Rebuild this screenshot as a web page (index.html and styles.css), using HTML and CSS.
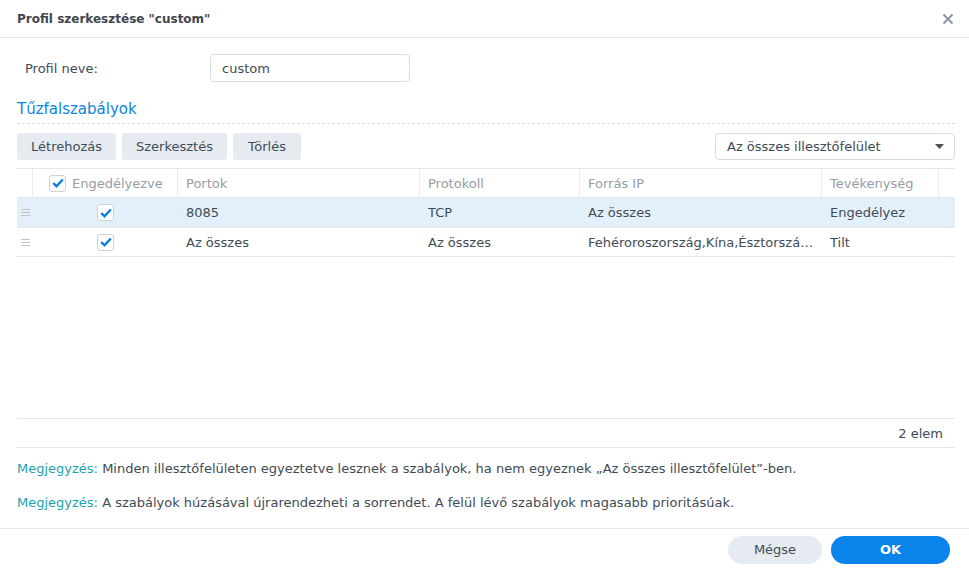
FILE: index.html
```html
<!DOCTYPE html>
<html lang="hu">
<head>
<meta charset="utf-8">
<title>Profil szerkesztése</title>
<link rel="stylesheet" href="styles.css">
</head>
<body>
<div class="dialog">
  <div class="titlebar">
    <span class="title">Profil szerkesztése "custom"</span>
    <svg class="close" width="12" height="12" viewBox="0 0 12 12"><path d="M1.5 1.5 L10.5 10.5 M10.5 1.5 L1.5 10.5" stroke="#9097a0" stroke-width="2" fill="none"/></svg>
  </div>
  <div class="content">
    <div class="field">
      <label class="field-label">Profil neve:</label>
      <div class="input">custom</div>
    </div>
    <div class="section-title">Tűzfalszabályok</div>
    <div class="toolbar">
      <div class="btns">
        <button class="btn">Létrehozás</button>
        <button class="btn">Szerkesztés</button>
        <button class="btn">Törlés</button>
      </div>
      <div class="select">
        <span>Az összes illesztőfelület</span>
        <svg width="9" height="5" viewBox="0 0 9 5"><path d="M0 0 H9 L4.5 5 Z" fill="#4a535c"/></svg>
      </div>
    </div>
    <div class="grid">
      <div class="row head">
        <div class="c c-h"></div>
        <div class="c c-en"><span class="cb"><svg width="12" height="10" viewBox="0 0 12 10"><path d="M1.2 5 L4.5 8.2 L10.8 1.5" stroke="#0a7fe3" stroke-width="2.4" fill="none"/></svg></span><span>Engedélyezve</span></div>
        <div class="c c-port">Portok</div>
        <div class="c c-proto">Protokoll</div>
        <div class="c c-ip">Forrás IP</div>
        <div class="c c-act">Tevékenység</div>
        <div class="c c-fill"></div>
      </div>
      <div class="row body sel">
        <div class="c c-h"><span class="handle"><i></i><i></i><i></i></span></div>
        <div class="c c-en center"><span class="cb"><svg width="12" height="10" viewBox="0 0 12 10"><path d="M1.2 5 L4.5 8.2 L10.8 1.5" stroke="#0a7fe3" stroke-width="2.4" fill="none"/></svg></span></div>
        <div class="c c-port">8085</div>
        <div class="c c-proto">TCP</div>
        <div class="c c-ip">Az összes</div>
        <div class="c c-act">Engedélyez</div>
        <div class="c c-fill"></div>
      </div>
      <div class="row body last">
        <div class="c c-h"><span class="handle"><i></i><i></i><i></i></span></div>
        <div class="c c-en center"><span class="cb"><svg width="12" height="10" viewBox="0 0 12 10"><path d="M1.2 5 L4.5 8.2 L10.8 1.5" stroke="#0a7fe3" stroke-width="2.4" fill="none"/></svg></span></div>
        <div class="c c-port">Az összes</div>
        <div class="c c-proto">Az összes</div>
        <div class="c c-ip"><span class="ell">Fehéroroszország,Kína,Észtország,Oroszország</span></div>
        <div class="c c-act">Tilt</div>
        <div class="c c-fill"></div>
      </div>
      <div class="grid-space"></div>
      <div class="grid-foot">2 elem</div>
    </div>
    <p class="note"><span class="note-key">Megjegyzés:</span> Minden illesztőfelületen egyeztetve lesznek a szabályok, ha nem egyeznek „Az összes illesztőfelület”-ben.</p>
    <p class="note"><span class="note-key">Megjegyzés:</span> A szabályok húzásával újrarendezheti a sorrendet. A felül lévő szabályok magasabb prioritásúak.</p>
  </div>
  <div class="footer">
    <button class="fbtn cancel">Mégse</button>
    <button class="fbtn ok">OK</button>
  </div>
</div>
</body>
</html>
```

FILE: styles.css
```css
* { box-sizing: border-box; }
html, body { margin: 0; padding: 0; background: #fff; }
body {
  font-family: "DejaVu Sans", Verdana, sans-serif;
  font-size: 13px;
  color: #414b55;
}
.dialog { width: 969px; height: 570px; display: flex; flex-direction: column; overflow: hidden; }
.titlebar {
  height: 38px;
  border-bottom: 1px solid #e3e8ee;
  display: flex; align-items: center; justify-content: space-between;
  padding: 0 15px 0 17px;
}
.title { font-weight: bold; font-size: 12px; color: #3f464e; }
.content { padding: 0 14px 0 17px; flex: 1; display: flex; flex-direction: column; }
.field { display: flex; align-items: center; margin-top: 16px; height: 28px; }
.field-label { width: 193px; padding-left: 8px; padding-top: 1px; color: #414b55; }
.input {
  width: 200px; height: 28px; border: 1px solid #d5dde5; border-radius: 4px;
  padding: 1px 11px 0; display: flex; align-items: center; color: #414b55;
}
.section-title {
  margin-top: 13px; height: 29px; font-size: 15px; color: #0a86e1;
  border-bottom: 1px dashed #d6dde5; padding-top: 5px;
}
.toolbar { display: flex; justify-content: space-between; margin-top: 9px; height: 27px; }
.btns { display: flex; gap: 6px; }
.btn {
  font: inherit; color: #414b55; background: #e6ebf2; border: 0; border-radius: 3px;
  height: 27px; padding: 0; cursor: pointer;
}
.btn:nth-child(1) { width: 99px; }
.btn:nth-child(2) { width: 105px; }
.btn:nth-child(3) { width: 68px; }
.select {
  width: 240px; height: 27px; border: 1px solid #d5dde5; border-radius: 4px;
  display: flex; align-items: center; justify-content: space-between; padding: 0 10px 0 11px;
}
.grid { margin-top: 8px; display: flex; flex-direction: column; flex: 0 0 280px; border-top: 1px solid #e3e8ee; }
.row { display: flex; }
.row.head { height: 28px; color: #969da6; }
.row.body { height: 30px; border-top: 1px solid #e3e8ee; }
.row.last { border-bottom: 1px solid #e3e8ee; }
.row.sel { background: #e3f0fc; }
.c { display: flex; align-items: center; padding: 0 8px; white-space: nowrap; overflow: hidden; min-width: 0; }
.head .c { border-right: 1px solid #e8ecf1; }
.head .c-fill { border-right: 0; }
.c-h { width: 16px; padding: 0; justify-content: center; flex: none; }
.c-en { width: 145px; padding-left: 16px; gap: 6px; flex: none; }
.c-en.center { justify-content: center; padding: 0; }
.c-port { width: 242px; flex: none; }
.c-proto { width: 160px; flex: none; }
.c-ip { width: 242px; flex: none; }
.c-act { width: 117px; flex: none; }
.c-fill { width: 16px; padding: 0; flex: none; }
.ell { overflow: hidden; text-overflow: ellipsis; white-space: nowrap; display: block; max-width: 100%; }
.cb {
  width: 17px; height: 17px; border: 1px solid #cbd3dc; border-radius: 3px; background: #fff;
  display: inline-flex; align-items: center; justify-content: center; flex: none;
}
.handle { display: flex; flex-direction: column; gap: 2px; width: 9px; }
.handle i { display: block; height: 1px; background: #bcc4cc; }
.grid-space { flex: 1; }
.grid-foot {
  height: 30px; border-top: 1px solid #e3e8ee; border-bottom: 1px solid #e3e8ee;
  display: flex; align-items: center; justify-content: flex-end; padding-right: 12px;
}
.note { margin: 12px 0 0; line-height: 17px; font-size: 13px; }
.note + .note { margin-top: 17px; }
.note-key { color: #1ba3ad; }
.footer {
  height: 42px; border-top: 1px solid #e3e8ee; display: flex; justify-content: flex-end;
  align-items: center; gap: 9px; padding: 0 19px 0 0; margin-top: auto;
}
.fbtn { font: inherit; height: 28px; border: 0; border-radius: 14px; cursor: pointer; }
.cancel { width: 94px; background: #e6ebf2; color: #414b55; }
.ok { width: 119px; background: #0a84ea; color: #fff; font-weight: bold; }
```
